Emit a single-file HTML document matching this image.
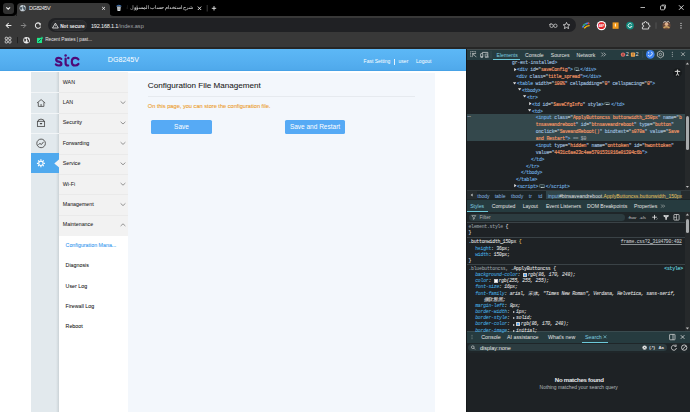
<!DOCTYPE html>
<html><head><meta charset="utf-8">
<style>
*{box-sizing:border-box;margin:0;padding:0}
html,body{width:690px;height:412px;overflow:hidden;background:#000}
body{position:relative;font-family:"Liberation Sans",sans-serif;}
.a{position:absolute;white-space:nowrap}
.t{line-height:1}
.mono{font-family:"Liberation Mono",monospace}
svg{position:absolute;overflow:visible}
.dl{font-size:4.8px;line-height:6.9px;letter-spacing:-0.23px;-webkit-text-stroke:0.14px}
.dt{font-size:5.1px;color:#e3e3e3}
</style></head><body>

<!-- ============ BROWSER CHROME ============ -->
<div class="a" style="left:0;top:0;width:690px;height:16px;background:#000"></div>
<!-- tab search button -->
<div class="a" style="left:3px;top:3px;width:10.5px;height:10.5px;border-radius:3px;background:#303030"></div>
<svg style="left:0;top:0" width="20" height="16"><path d="M6.3 7.4 L8.2 9.2 L10.1 7.4" stroke="#e8e8e8" stroke-width="1.1" fill="none"/></svg>
<!-- active tab -->
<div class="a" style="left:16.5px;top:3px;width:93px;height:14px;border-radius:4px 4px 0 0;background:#383838"></div>
<svg style="left:0;top:0" width="120" height="20">
  <path d="M12.5 16 Q16.5 16 16.5 12 L16.5 16 Z" fill="#383838"/>
  <path d="M113.5 16 Q109.5 16 109.5 12 L109.5 16 Z" fill="#383838"/>
  <circle cx="22.7" cy="8.2" r="3.1" fill="#c9d3da"/>
  <path d="M20.2 6.8 Q21.6 6.4 22.2 7.6 Q22.6 8.8 21.2 10.2 L20 9 Z M23.6 5.3 Q23.2 6.8 24.6 7.3 Q25.8 7.6 25.6 9.2 Q24.8 10.8 23.6 10.6 Q24.2 9 23 8.6 Q22 8 23 5.3 Z" fill="#4f5d68"/>
  <path d="M102.2 7 L104.9 9.7 M104.9 7 L102.2 9.7" stroke="#f0f0f0" stroke-width="0.9"/>
</svg>
<div class="a t" style="left:29px;top:5.9px;font-size:5.5px;color:#e8e8e8;letter-spacing:-0.42px">DG8245V</div>
<!-- inactive tab -->
<svg style="left:0;top:0" width="230" height="16">
  <path d="M117 6.4 L120.8 6.4 L120.4 10.8 Q118.9 11.4 117.4 10.8 Z" fill="#d6dadd"/>
  <path d="M117.3 7.9 L120.5 7.9 M117.4 9.3 L120.4 9.3" stroke="#6a7075" stroke-width="0.45"/>
  <path d="M116.4 6.2 Q118.9 4.2 121.4 6.2" stroke="#3f78c0" stroke-width="1" fill="none"/>
  <path d="M197.8 6.6 L201.2 10 M201.2 6.6 L197.8 10" stroke="#eee" stroke-width="0.9"/>
  <path d="M207.2 5 L207.2 11.5" stroke="#555" stroke-width="0.7"/>
  <path d="M211.8 8.3 L216.2 8.3 M214 6.1 L214 10.5" stroke="#eee" stroke-width="0.9"/>
</svg>
<div class="a t" style="left:126px;top:5.4px;font-size:4.7px;line-height:6px;height:7px;color:#e6e6e6;direction:rtl;width:67.5px;text-align:right;overflow:hidden;-webkit-mask-image:linear-gradient(90deg,transparent,#000 8px)">شرح استخدام حساب المسؤول ادمن | مجتمع</div>

<!-- window controls -->
<svg style="left:0;top:0" width="690" height="16">
  <path d="M640.5 7.5 L645 7.5" stroke="#ddd" stroke-width="0.8"/>
  <rect x="660.5" y="5.8" width="4" height="4" rx="0.8" fill="none" stroke="#ddd" stroke-width="0.8"/>
  <path d="M661.8 5 L665.5 5 L665.5 8.5" stroke="#ddd" stroke-width="0.7" fill="none"/>
  <path d="M679 5.3 L683.5 9.8 M683.5 5.3 L679 9.8" stroke="#eee" stroke-width="0.9"/>
</svg>

<!-- toolbar + bookmarks -->
<div class="a" style="left:0;top:16px;width:690px;height:31.5px;background:#383838"></div>
<div class="a" style="left:0;top:47.3px;width:690px;height:1.3px;background:#262626"></div>
<svg style="left:0;top:0" width="60" height="48">
  <path d="M11.4 25.5 L6.2 25.5 M8.7 23 L6.2 25.5 L8.7 28" stroke="#e8e8e8" stroke-width="1.05" fill="none"/>
  <path d="M20.8 25.5 L25.8 25.5 M23.3 23 L25.8 25.5 L23.3 28" stroke="#8a8a8a" stroke-width="0.95" fill="none"/>
  <path d="M40.3 24 A2.7 2.7 0 1 0 40.6 26.6" stroke="#e8e8e8" stroke-width="1.05" fill="none"/>
  <path d="M38.9 23 L40.6 23.8 L40.2 25.6 Z" fill="#e8e8e8" stroke="#e8e8e8" stroke-width="0.5"/>
</svg>
<!-- address bar -->
<div class="a" style="left:48px;top:18.3px;width:528px;height:14px;border-radius:7px;background:#202124"></div>
<div class="a" style="left:50.8px;top:20.4px;width:36px;height:10.6px;border-radius:5.3px;background:#2a2b2e;border:0.4px solid #313235"></div>
<svg style="left:0;top:0" width="100" height="40">
  <path d="M55.4 23.1 L52.5 28 L58.3 28 Z" stroke="#ececec" stroke-width="0.8" fill="none" stroke-linejoin="round"/>
  <path d="M55.4 24.6 L55.4 26.2 M55.4 26.8 L55.4 27.3" stroke="#ececec" stroke-width="0.6"/>
</svg>
<div class="a t" style="left:60.2px;top:24.6px;font-size:4.75px;font-weight:bold;color:#ececec">Not secure</div>
<div class="a t" style="left:90.9px;top:24px;font-size:5.6px;color:#f4f4f4;"><span style="letter-spacing:-0.2px">192.168.1.1</span><span style="color:#a0a4a8">/index.asp</span></div>
<svg style="left:0;top:0" width="690" height="40">
  <!-- eye off -->
  <circle cx="551.6" cy="25.8" r="1.7" fill="none" stroke="#c8c8c8" stroke-width="0.8"/>
  <circle cx="555.4" cy="25.8" r="1.7" fill="none" stroke="#c8c8c8" stroke-width="0.8"/>
  <path d="M549 25 Q550 23.4 551.6 23.6 M553.3 25 L553.7 25" stroke="#c8c8c8" stroke-width="0.7" fill="none"/>
  <!-- star -->
  <path d="M566.5 22.4 L567.5 24.6 L569.8 24.8 L568 26.3 L568.6 28.6 L566.5 27.4 L564.4 28.6 L565 26.3 L563.2 24.8 L565.5 24.6 Z" stroke="#e0e0e0" stroke-width="0.8" fill="none" stroke-linejoin="round"/>
  <!-- ext 1 colorful -->
  <path d="M582.6 27.6 Q584 23.6 588.8 23" stroke="#4285f4" stroke-width="1.6" fill="none"/>
  <path d="M584.2 28.2 Q586.6 25.4 589.6 25.6" stroke="#fbbc04" stroke-width="1.4" fill="none"/>
  <path d="M583 25.4 Q584.6 24 586 24.4" stroke="#34a853" stroke-width="1.2" fill="none"/>
  <circle cx="588.6" cy="23.4" r="0.9" fill="#ea4335"/>
  <!-- ABP -->
  <circle cx="601.5" cy="25.6" r="4.7" fill="#fff"/>
  <path d="M599.9 22.2 L603.1 22.2 L604.9 24 L604.9 27.2 L603.1 29 L599.9 29 L598.1 27.2 L598.1 24 Z" fill="#e3262b"/>
  <text x="601.5" y="26.7" font-size="2.6" font-family="Liberation Sans" font-weight="bold" fill="#fff" text-anchor="middle">ABP</text>
  <!-- orange -->
  <rect x="612.6" y="22.4" width="6" height="6.4" fill="#f29a1d"/>
  <path d="M615.4 23.6 L615.4 26.6" stroke="#fff" stroke-width="0.9"/>
  <!-- grammarly -->
  <circle cx="630" cy="25.6" r="3.9" fill="#138a7e"/>
  <path d="M631.7 24.4 A2 2 0 1 0 631.9 26.4 L630.4 26.4" stroke="#e9f7f4" stroke-width="0.9" fill="none"/>
  <!-- puzzle -->
  <path d="M642.4 23 L644.3 23 Q644.3 21.5 645.5 21.5 Q646.7 21.5 646.7 23 L648.6 23 L648.6 25 Q650 25 650 26.1 Q650 27.2 648.6 27.2 L648.6 29 L642.4 29 L642.4 27 Q643.8 27 643.8 26 Q643.8 25 642.4 25 Z" stroke="#e6e6e6" stroke-width="0.85" fill="none" stroke-linejoin="round"/>
  <path d="M656 22.4 L656 28.8" stroke="#5a5a5a" stroke-width="0.8"/>
  <!-- avatar -->
  <circle cx="666.5" cy="25.6" r="4" fill="#6b4a3a"/>
  <circle cx="666.5" cy="24.3" r="1.8" fill="#e0b08a"/>
  <path d="M663.5 28 Q666.5 25.5 669.5 28" stroke="#c9a060" stroke-width="1.5" fill="none"/>
  <path d="M663.2 22.5 L665 21.5 L666.5 22.3 L668.3 21.3 L669.6 22.6" stroke="#d9d9d9" stroke-width="0.8" fill="none"/>
  <!-- menu -->
  <circle cx="681" cy="23.3" r="0.65" fill="#e6e6e6"/>
  <circle cx="681" cy="25.6" r="0.65" fill="#e6e6e6"/>
  <circle cx="681" cy="27.9" r="0.65" fill="#e6e6e6"/>
</svg>

<!-- bookmarks bar -->
<svg style="left:0;top:0" width="120" height="48">
  <rect x="5.2" y="37.2" width="2.4" height="2.4" rx="0.8" fill="none" stroke="#d8d8d8" stroke-width="0.9"/>
  <rect x="8.6" y="37.2" width="2.4" height="2.4" rx="0.8" fill="none" stroke="#d8d8d8" stroke-width="0.9"/>
  <rect x="5.2" y="40.6" width="2.4" height="2.4" rx="0.8" fill="none" stroke="#d8d8d8" stroke-width="0.9"/>
  <rect x="8.6" y="40.6" width="2.4" height="2.4" rx="0.8" fill="none" stroke="#d8d8d8" stroke-width="0.9"/>
  <path d="M17.5 37 L17.5 43.2" stroke="#1a1a1a" stroke-width="0.8"/>
  <circle cx="26.6" cy="40.2" r="3.3" fill="#ececec"/>
  <path d="M24.2 38.6 Q25.6 38.4 26 39.6 Q26.2 40.8 25 42 Q24 41 24.2 38.6 Z M27.6 37.2 Q27.2 38.8 28.4 39.4 Q29.6 40 28.8 42.2 Q27.8 42.8 27.4 41.6 Q28 40.4 27 40 Q26 39.4 27.6 37.2 Z" fill="#383838"/>
  <rect x="36.8" y="37.6" width="5.4" height="5.6" fill="#1ee88e" stroke="#4a1818" stroke-width="0.45"/>
  <path d="M38.3 41.8 L40.9 39.2" stroke="#123" stroke-width="0.8"/>
  <path d="M40.8 37.3 L42.6 37.3 L42.6 39.1" stroke="#1ee88e" stroke-width="0.7" fill="none"/>
</svg>
<div class="a t" style="left:45.2px;top:37.8px;font-size:4.75px;color:#e4e4e4;letter-spacing:-0.04px">Recent Pastes | past...</div>

<!-- ============ PAGE ============ -->
<div id="page" class="a" style="left:0;top:48.6px;width:466px;height:364px;background:#fff;overflow:hidden"></div>
<!-- header -->
<div class="a" style="left:0;top:48.7px;width:466px;height:22.4px;background:linear-gradient(#5cb8f6,#55aff0 60%,#4ea8ea)"></div>
<div class="a" style="left:0;top:70.2px;width:466px;height:0.9px;background:#47a2e6"></div>
<svg style="left:0;top:0" width="466" height="80">
  <path d="M61.3 58.9 Q60.4 57.8 58.7 57.8 Q56.2 57.8 56.2 59.7 Q56.2 61.2 58.7 61.7 Q61.4 62.2 61.4 64 Q61.4 65.5 58.7 65.5 Q56.9 65.5 55.9 64.4" stroke="#4f0a78" stroke-width="2.2" fill="none" stroke-linecap="round"/>
  <circle cx="65.6" cy="55.5" r="1.25" fill="#4f0a78"/>
  <path d="M65.6 58.6 L65.6 63.2 Q65.6 65.5 68.2 65.5" stroke="#4f0a78" stroke-width="2.2" fill="none" stroke-linecap="round"/>
  <circle cx="68.3" cy="58" r="1.25" fill="#4f0a78"/>
  <path d="M78.4 59.3 Q77.3 57.8 75.2 57.8 Q71.8 57.8 71.8 61.65 Q71.8 65.5 75.2 65.5 Q77.3 65.5 78.4 64" stroke="#4f0a78" stroke-width="2.2" fill="none" stroke-linecap="round"/>
</svg>
<div class="a t" style="left:107.8px;top:56.8px;font-size:7.1px;color:#fff">DG8245V</div>
<div class="a t" style="left:363.6px;top:58.8px;font-size:5px;color:#fff">Fast Setting</div>
<div class="a" style="left:394.3px;top:58.8px;width:0.5px;height:6px;background:rgba(255,255,255,.85)"></div>
<div class="a t" style="left:398.6px;top:58.8px;font-size:5px;color:#fff">user</div>
<div class="a t" style="left:416.1px;top:58.8px;font-size:5px;color:#fff">Logout</div>

<!-- icon column -->
<div class="a" style="left:31px;top:72px;width:27.8px;height:340px;background:#e2e9ed"></div>
<div class="a" style="left:56.4px;top:72px;width:2.4px;height:340px;background:linear-gradient(90deg,rgba(200,208,212,0),rgba(200,208,212,.9))"></div>
<div class="a" style="left:31px;top:92.3px;width:27.8px;height:0.6px;background:#f2f5f7"></div>
<div class="a" style="left:31px;top:112.7px;width:27.8px;height:0.6px;background:#f2f5f7"></div>
<div class="a" style="left:31px;top:133.1px;width:27.8px;height:0.6px;background:#f2f5f7"></div>
<div class="a" style="left:31px;top:153.4px;width:28.2px;height:20px;background:#4fa9ee"></div>
<svg style="left:0;top:0" width="70" height="180">
  <path d="M54.3 163.4 L59.2 159.3 L59.2 167.5 Z" fill="#f4f4f4"/>
  <!-- home -->
  <path d="M37 103 L41.1 99.6 L45.2 103" stroke="#4d4d4d" stroke-width="0.85" fill="none" stroke-linejoin="round"/>
  <path d="M38.3 102.4 L38.3 106.4 L43.9 106.4 L43.9 102.4" stroke="#4d4d4d" stroke-width="0.85" fill="none"/>
  <rect x="40.3" y="104" width="1.6" height="2.4" fill="#4d4d4d" opacity="0.55"/>
  <!-- lock box -->
  <rect x="37.4" y="121.3" width="7.2" height="5.1" fill="none" stroke="#4d4d4d" stroke-width="0.85"/>
  <path d="M38.4 121.3 L38.4 119.9 Q41 118.3 43.6 119.9 L43.6 121.3" stroke="#4d4d4d" stroke-width="0.9" fill="none"/>
  <path d="M39.6 122.9 L42.4 122.9 L41 124.8 Z" fill="#3a3a3a"/>
  <!-- gauge -->
  <circle cx="41.1" cy="143.4" r="4.3" fill="none" stroke="#4d4d4d" stroke-width="0.9"/>
  <path d="M38.4 144.6 L39.9 143.5 L41.5 144.4 L43.6 141.8" stroke="#3a3a3a" stroke-width="0.85" fill="none"/>
  <!-- gear -->
  <circle cx="40.9" cy="163.3" r="2.2" fill="none" stroke="#fff" stroke-width="1.05"/>
  <g stroke="#fff" stroke-width="1.2" stroke-linecap="butt">
    <path d="M40.9 159.3 L40.9 160.6 M40.9 166 L40.9 167.3 M36.9 163.3 L38.2 163.3 M43.6 163.3 L44.9 163.3"/>
    <path d="M38.07 160.47 L39 161.4 M42.8 165.2 L43.73 166.13 M38.07 166.13 L39 165.2 M42.8 161.4 L43.73 160.47"/>
  </g>
</svg>

<!-- menu column -->
<div class="a" style="left:58.8px;top:72px;width:69px;height:163.6px;background:#f2f2f2"></div>
<div class="a" style="left:58.8px;top:235.6px;width:69px;height:177px;background:#fff"></div>
<div class="a" style="left:58.8px;top:92.3px;width:69px;height:0.6px;background:#eaeaea"></div>
<div class="a" style="left:58.8px;top:112.7px;width:69px;height:0.6px;background:#eaeaea"></div>
<div class="a" style="left:58.8px;top:133.1px;width:69px;height:0.6px;background:#eaeaea"></div>
<div class="a" style="left:58.8px;top:153.5px;width:69px;height:0.6px;background:#eaeaea"></div>
<div class="a" style="left:58.8px;top:173.9px;width:69px;height:0.6px;background:#eaeaea"></div>
<div class="a" style="left:58.8px;top:194.3px;width:69px;height:0.6px;background:#eaeaea"></div>
<div class="a" style="left:58.8px;top:214.7px;width:69px;height:0.6px;background:#eaeaea"></div>
<div class="a t" style="left:62.8px;top:79.5px;font-size:5.3px;color:#1e1e1e;-webkit-text-stroke:0.04px">WAN</div>
<div class="a t" style="left:62.8px;top:99.9px;font-size:5.3px;color:#1e1e1e;-webkit-text-stroke:0.04px">LAN</div>
<div class="a t" style="left:62.8px;top:120.3px;font-size:5.3px;color:#1e1e1e;-webkit-text-stroke:0.04px">Security</div>
<div class="a t" style="left:62.8px;top:140.7px;font-size:5.3px;color:#1e1e1e;-webkit-text-stroke:0.04px">Forwarding</div>
<div class="a t" style="left:62.8px;top:161.1px;font-size:5.3px;color:#1e1e1e;-webkit-text-stroke:0.04px">Service</div>
<div class="a t" style="left:62.8px;top:181.5px;font-size:5.3px;color:#1e1e1e;-webkit-text-stroke:0.04px">Wi-Fi</div>
<div class="a t" style="left:62.8px;top:201.9px;font-size:5.3px;color:#1e1e1e;-webkit-text-stroke:0.04px">Management</div>
<div class="a t" style="left:62.8px;top:222.3px;font-size:5.3px;color:#1e1e1e;-webkit-text-stroke:0.04px">Maintenance</div>
<svg style="left:0;top:0" width="130" height="240">
  <path d="M120.6 101.4 L123 103.6 L125.4 101.4" stroke="#6a6a6a" stroke-width="0.7" fill="none"/>
  <path d="M120.6 121.8 L123 124 L125.4 121.8" stroke="#6a6a6a" stroke-width="0.7" fill="none"/>
  <path d="M120.6 142.2 L123 144.4 L125.4 142.2" stroke="#6a6a6a" stroke-width="0.7" fill="none"/>
  <path d="M120.6 162.6 L123 164.8 L125.4 162.6" stroke="#6a6a6a" stroke-width="0.7" fill="none"/>
  <path d="M120.6 183 L123 185.2 L125.4 183" stroke="#6a6a6a" stroke-width="0.7" fill="none"/>
  <path d="M120.6 203.4 L123 205.6 L125.4 203.4" stroke="#6a6a6a" stroke-width="0.7" fill="none"/>
  <path d="M120.6 226 L123 223.8 L125.4 226" stroke="#6a6a6a" stroke-width="0.7" fill="none"/>
</svg>
<div class="a t" style="left:65.6px;top:243px;font-size:5.3px;color:#3d9cf0;-webkit-text-stroke:0.08px">Configuration Mana...</div>
<div class="a t" style="left:65.6px;top:263.2px;font-size:5.3px;color:#111;-webkit-text-stroke:0.04px">Diagnosis</div>
<div class="a t" style="left:65.6px;top:283.6px;font-size:5.3px;color:#111;-webkit-text-stroke:0.04px">User Log</div>
<div class="a t" style="left:65.6px;top:304px;font-size:5.3px;color:#111;-webkit-text-stroke:0.04px">Firewall Log</div>
<div class="a t" style="left:65.6px;top:324.4px;font-size:5.3px;color:#111;-webkit-text-stroke:0.04px">Reboot</div>

<!-- content -->
<div class="a" style="left:127.8px;top:72.8px;width:307.2px;height:340px;background:#f3f7fc"></div>
<div class="a t" style="left:147.8px;top:81.6px;font-size:8.1px;color:#222;-webkit-text-stroke:0.08px">Configuration File Management</div>
<div class="a" style="left:148px;top:95.6px;width:267px;height:0.5px;background:#e6eaef"></div>
<div class="a t" style="left:147.8px;top:104.2px;font-size:5.65px;color:#eda030;-webkit-text-stroke:0.1px">On this page, you can store the configuration file.</div>
<div class="a" style="left:151.2px;top:119.8px;width:60.6px;height:14.1px;border-radius:1.6px;background:#56aaf5"></div>
<div class="a t" style="left:151.2px;top:123.7px;width:60.6px;text-align:center;font-size:6.5px;color:#fff">Save</div>
<div class="a" style="left:284.6px;top:119.8px;width:60.8px;height:14.1px;border-radius:1.6px;background:#56aaf5"></div>
<div class="a t" style="left:284.6px;top:123.7px;width:60.8px;text-align:center;font-size:6.5px;color:#fff">Save and Restart</div>


<!-- ============ DEVTOOLS ============ -->
<!-- devtools bg -->
<div class="a" style="left:466px;top:48.6px;width:224px;height:364px;background:#1e2225"></div>
<div class="a" style="left:466px;top:48.6px;width:0.8px;height:364px;background:#15181a"></div>
<!-- top toolbar -->
<div class="a" style="left:466.8px;top:48.8px;width:223.2px;height:11px;background:#263c40"></div>
<div class="a" style="left:466.8px;top:48.6px;width:223.2px;height:0.6px;background:#454d4f"></div>
<svg style="left:0;top:0" width="690" height="62">
  <!-- inspect -->
  <path d="M475.6 54 L475.6 51.6 L470.6 51.6 L470.6 56.6 L472.8 56.6" stroke="#c4c7c5" stroke-width="0.75" fill="none" stroke-dasharray="1.2 0.5"/>
  <path d="M472.6 53.4 L476.4 57.2 M472.6 53.4 L472.8 56 M472.6 53.4 L475.2 53.6" stroke="#c4c7c5" stroke-width="0.75" fill="none"/>
  <!-- device -->
  <path d="M482.4 56.6 L482.4 52.4 L487.8 52.4 L487.8 56.6" stroke="#d0d3d3" stroke-width="0.75" fill="none"/>
  <rect x="480.6" y="53.6" width="2.2" height="3.4" rx="0.4" fill="#263c40" stroke="#d0d3d3" stroke-width="0.7"/>
  <path d="M480.6 57 L483 57 M485 57 L488.6 57" stroke="#e0e3e3" stroke-width="0.9"/>
  <rect x="485.2" y="54" width="2" height="2.8" rx="0.3" fill="#263c40" stroke="#d0d3d3" stroke-width="0.6"/>
  <path d="M491 50.8 L491 58" stroke="#3f5054" stroke-width="0.6"/>
  <!-- separator before icons -->
  <path d="M642.7 51 L642.7 57.8" stroke="#3f5054" stroke-width="0.6"/>
  <!-- error -->
  <circle cx="623" cy="54.6" r="2.2" fill="#e46962"/>
  <path d="M622.2 53.8 L623.8 55.4 M623.8 53.8 L622.2 55.4" stroke="#3a1a1a" stroke-width="0.55"/>
  <!-- warning -->
  <rect x="630.9" y="52.5" width="4.2" height="4.2" rx="0.7" fill="#f0a34a"/>
  <path d="M633 53.3 L633 55.1 M633 55.6 L633 56" stroke="#3a2a1a" stroke-width="0.6"/>
  <!-- AI -->
  <circle cx="650.3" cy="54.4" r="4.3" fill="#3b82f0"/>
  <path d="M651.4 51.8 A2.3 2.3 0 1 1 648 55.4" stroke="#fff" stroke-width="0.8" fill="none"/>
  <circle cx="648.6" cy="52.8" r="0.6" fill="#fff"/>
  <!-- gear -->
  <path d="M660.4 50.9 L663.4 52.65 L663.4 56.15 L660.4 57.9 L657.4 56.15 L657.4 52.65 Z" fill="none" stroke="#c4c7c5" stroke-width="0.8" stroke-linejoin="round"/>
  <circle cx="660.4" cy="54.4" r="1.2" fill="none" stroke="#c4c7c5" stroke-width="0.7"/>
  <!-- kebab -->
  <circle cx="672.3" cy="52.3" r="0.5" fill="#c4c7c5"/>
  <circle cx="672.3" cy="54.3" r="0.5" fill="#c4c7c5"/>
  <circle cx="672.3" cy="56.3" r="0.5" fill="#c4c7c5"/>
  <!-- close -->
  <path d="M681.2 52.4 L684.8 56 M684.8 52.4 L681.2 56" stroke="#c4c7c5" stroke-width="0.75"/>
  <!-- >> -->
  <path d="M601.4 52.6 L603.2 54.5 L601.4 56.4 M603.8 52.6 L605.6 54.5 L603.8 56.4" stroke="#d0d0d0" stroke-width="0.7" fill="none"/>
</svg>
<div class="a t dt" style="left:496.6px;top:52.6px;color:#7fcfe0">Elements</div>
<div class="a" style="left:493px;top:58.9px;width:27px;height:0.8px;background:#6cc9d9"></div>
<div class="a t dt" style="left:525px;top:52.6px">Console</div>
<div class="a t dt" style="left:550.8px;top:52.6px">Sources</div>
<div class="a t dt" style="left:576.6px;top:52.6px">Network</div>
<div class="a t dt" style="left:625.9px;top:52.4px;font-size:5px">2</div>
<div class="a t dt" style="left:635.8px;top:52.4px;font-size:5px">2</div>

<!-- a11y icon -->
<svg style="left:0;top:0" width="690" height="80">
  <circle cx="677.5" cy="72.6" r="4.4" fill="#16191b"/>
  <circle cx="677.5" cy="70.3" r="0.8" fill="#e6e6e6"/>
  <path d="M674.8 71.4 L680.2 71.4 M677.5 71.4 L677.5 73.6 M677.5 73.4 L676.3 75.6 M677.5 73.4 L678.7 75.6" stroke="#e6e6e6" stroke-width="0.9" fill="none"/>
</svg>
<!-- selected node highlight -->
<div class="a" style="left:466.8px;top:113.7px;width:218px;height:27.4px;background:#34484c"></div>
<div class="a t" style="left:467.2px;top:114.6px;font-size:4px;color:#9aa0a6;letter-spacing:-0.3px">•••</div>
<!-- elements scrollbar -->
<div class="a" style="left:684.7px;top:59.8px;width:5.3px;height:130.5px;background:#26292b"></div>
<div class="a" style="left:685.8px;top:116px;width:3.2px;height:34.4px;border-radius:1.6px;background:#a8abad"></div>
<svg style="left:0;top:0" width="690" height="200">
  <path d="M685.8 64.4 L687.4 62.6 L689 64.4 Z" fill="#bdbdbd"/>
  <path d="M685.8 186 L687.4 187.8 L689 186 Z" fill="#bdbdbd"/>
</svg>
<div class="a mono dl" style="left:512px;top:60.45px"><span style="color:#9bbbdc;">gr-ext-installed</span><span style="color:#6aa4dc;">&gt;</span></div>
<svg style="left:513.50px;top:67.57px" width="3" height="3"><path d="M0.2 0 L2.6 1.6 L0.2 3.2 Z" fill="#e2e2e2"/></svg>
<div class="a mono dl" style="left:517px;top:67.32px"><span style="color:#6aa4dc;">&lt;div</span> <span style="color:#9bbbdc;">id</span><span style="color:#e3e3e3;">=</span><span style="color:#9bbbdc;">&quot;</span><span style="color:#f29766;">saveConfig</span><span style="color:#9bbbdc;">&quot;</span><span style="color:#6aa4dc;">&gt;</span><span style="display:inline-block;position:relative;width:5.6px;height:3.8px;margin:0 1.2px 0 0.8px;vertical-align:0.4px;border-radius:1.2px;background:#2c3b3e;border:0.4px solid #56686c;-webkit-text-stroke:0"><span style="position:absolute;left:1.1px;top:1.5px;width:0.7px;height:0.7px;background:#b8c4c6;box-shadow:1.2px 0 #b8c4c6,2.4px 0 #b8c4c6"></span></span><span style="color:#6aa4dc;">&lt;/div</span><span style="color:#6aa4dc;">&gt;</span></div>
<div class="a mono dl" style="left:516.3px;top:74.19px"><span style="color:#6aa4dc;">&lt;div</span> <span style="color:#9bbbdc;">class</span><span style="color:#e3e3e3;">=</span><span style="color:#9bbbdc;">&quot;</span><span style="color:#f29766;">title_spread</span><span style="color:#9bbbdc;">&quot;</span><span style="color:#6aa4dc;">&gt;</span><span style="color:#6aa4dc;">&lt;/div</span><span style="color:#6aa4dc;">&gt;</span></div>
<svg style="left:513.10px;top:81.61px" width="3" height="3"><path d="M0 0.2 L3.2 0.2 L1.6 2.6 Z" fill="#e2e2e2"/></svg>
<div class="a mono dl" style="left:517px;top:81.06px"><span style="color:#6aa4dc;">&lt;table</span> <span style="color:#9bbbdc;">width</span><span style="color:#e3e3e3;">=</span><span style="color:#9bbbdc;">&quot;</span><span style="color:#f29766;">100%</span><span style="color:#9bbbdc;">&quot;</span> <span style="color:#9bbbdc;">cellpadding</span><span style="color:#e3e3e3;">=</span><span style="color:#9bbbdc;">&quot;</span><span style="color:#f29766;">0</span><span style="color:#9bbbdc;">&quot;</span> <span style="color:#9bbbdc;">cellspacing</span><span style="color:#e3e3e3;">=</span><span style="color:#9bbbdc;">&quot;</span><span style="color:#f29766;">0</span><span style="color:#9bbbdc;">&quot;</span><span style="color:#6aa4dc;">&gt;</span></div>
<svg style="left:518.10px;top:88.48px" width="3" height="3"><path d="M0 0.2 L3.2 0.2 L1.6 2.6 Z" fill="#e2e2e2"/></svg>
<div class="a mono dl" style="left:522px;top:87.93px"><span style="color:#6aa4dc;">&lt;tbody</span><span style="color:#6aa4dc;">&gt;</span></div>
<svg style="left:523.10px;top:95.35px" width="3" height="3"><path d="M0 0.2 L3.2 0.2 L1.6 2.6 Z" fill="#e2e2e2"/></svg>
<div class="a mono dl" style="left:527px;top:94.80px"><span style="color:#6aa4dc;">&lt;tr</span><span style="color:#6aa4dc;">&gt;</span></div>
<svg style="left:528.50px;top:101.92px" width="3" height="3"><path d="M0.2 0 L2.6 1.6 L0.2 3.2 Z" fill="#e2e2e2"/></svg>
<div class="a mono dl" style="left:532px;top:101.67px"><span style="color:#6aa4dc;">&lt;td</span> <span style="color:#9bbbdc;">id</span><span style="color:#e3e3e3;">=</span><span style="color:#9bbbdc;">&quot;</span><span style="color:#f29766;">SaveCfgInfo</span><span style="color:#9bbbdc;">&quot;</span> <span style="color:#9bbbdc;">style</span><span style="color:#6aa4dc;">&gt;</span><span style="display:inline-block;position:relative;width:5.6px;height:3.8px;margin:0 1.2px 0 0.8px;vertical-align:0.4px;border-radius:1.2px;background:#2c3b3e;border:0.4px solid #56686c;-webkit-text-stroke:0"><span style="position:absolute;left:1.1px;top:1.5px;width:0.7px;height:0.7px;background:#b8c4c6;box-shadow:1.2px 0 #b8c4c6,2.4px 0 #b8c4c6"></span></span><span style="color:#6aa4dc;">&lt;/td</span><span style="color:#6aa4dc;">&gt;</span></div>
<svg style="left:528.10px;top:109.09px" width="3" height="3"><path d="M0 0.2 L3.2 0.2 L1.6 2.6 Z" fill="#e2e2e2"/></svg>
<div class="a mono dl" style="left:532px;top:108.54px"><span style="color:#6aa4dc;">&lt;td</span><span style="color:#6aa4dc;">&gt;</span></div>
<div class="a mono dl" style="left:535.8px;top:115.41px"><span style="color:#6aa4dc;">&lt;input</span> <span style="color:#9bbbdc;">class</span><span style="color:#e3e3e3;">=</span><span style="color:#9bbbdc;">&quot;</span><span style="color:#f29766;">ApplyButtoncss buttonwidth_150px</span><span style="color:#9bbbdc;">&quot;</span> <span style="color:#9bbbdc;">name</span><span style="color:#e3e3e3;">=</span><span style="color:#9bbbdc;">&quot;</span><span style="color:#f29766;">b</span></div>
<div class="a mono dl" style="left:535.8px;top:122.28px"><span style="color:#f29766;">tnsaveandreboot</span><span style="color:#9bbbdc;">&quot;</span> <span style="color:#9bbbdc;">id</span><span style="color:#e3e3e3;">=</span><span style="color:#9bbbdc;">&quot;</span><span style="color:#f29766;">btnsaveandreboot</span><span style="color:#9bbbdc;">&quot;</span> <span style="color:#9bbbdc;">type</span><span style="color:#e3e3e3;">=</span><span style="color:#9bbbdc;">&quot;</span><span style="color:#f29766;">button</span><span style="color:#9bbbdc;">&quot;</span></div>
<div class="a mono dl" style="left:535.8px;top:129.15px"><span style="color:#9bbbdc;">onclick</span><span style="color:#e3e3e3;">=</span><span style="color:#9bbbdc;">&quot;</span><span style="color:#f29766;">SaveandReboot()</span><span style="color:#9bbbdc;">&quot;</span> <span style="color:#9bbbdc;">bindtext</span><span style="color:#e3e3e3;">=</span><span style="color:#9bbbdc;">&quot;</span><span style="color:#f29766;">s070a</span><span style="color:#9bbbdc;">&quot;</span> <span style="color:#9bbbdc;">value</span><span style="color:#e3e3e3;">=</span><span style="color:#9bbbdc;">&quot;</span><span style="color:#f29766;">Save</span></div>
<div class="a mono dl" style="left:535.8px;top:136.02px"><span style="color:#f29766;">and Restart</span><span style="color:#9bbbdc;">&quot;</span><span style="color:#6aa4dc;">&gt;</span><span style="color:#9aa0a6;"> == $0</span></div>
<div class="a mono dl" style="left:535.8px;top:142.89px"><span style="color:#6aa4dc;">&lt;input</span> <span style="color:#9bbbdc;">type</span><span style="color:#e3e3e3;">=</span><span style="color:#9bbbdc;">&quot;</span><span style="color:#f29766;">hidden</span><span style="color:#9bbbdc;">&quot;</span> <span style="color:#9bbbdc;">name</span><span style="color:#e3e3e3;">=</span><span style="color:#9bbbdc;">&quot;</span><span style="color:#f29766;">onttoken</span><span style="color:#9bbbdc;">&quot;</span> <span style="color:#9bbbdc;">id</span><span style="color:#e3e3e3;">=</span><span style="color:#9bbbdc;">&quot;</span><span style="color:#f29766;">hwonttoken</span><span style="color:#9bbbdc;">&quot;</span></div>
<div class="a mono dl" style="left:535.8px;top:149.76px"><span style="color:#9bbbdc;">value</span><span style="color:#e3e3e3;">=</span><span style="color:#9bbbdc;">&quot;</span><span style="color:#f29766;">4431c6ae23c4ee5701531816e81304c6b</span><span style="color:#9bbbdc;">&quot;</span><span style="color:#6aa4dc;">&gt;</span></div>
<div class="a mono dl" style="left:531px;top:156.63px"><span style="color:#6aa4dc;">&lt;/td</span><span style="color:#6aa4dc;">&gt;</span></div>
<div class="a mono dl" style="left:526px;top:163.50px"><span style="color:#6aa4dc;">&lt;/tr</span><span style="color:#6aa4dc;">&gt;</span></div>
<div class="a mono dl" style="left:521px;top:170.37px"><span style="color:#6aa4dc;">&lt;/tbody</span><span style="color:#6aa4dc;">&gt;</span></div>
<div class="a mono dl" style="left:516px;top:177.24px"><span style="color:#6aa4dc;">&lt;/table</span><span style="color:#6aa4dc;">&gt;</span></div>
<svg style="left:513.50px;top:184.36px" width="3" height="3"><path d="M0.2 0 L2.6 1.6 L0.2 3.2 Z" fill="#e2e2e2"/></svg>
<div class="a mono dl" style="left:517px;top:184.11px"><span style="color:#6aa4dc;">&lt;script</span><span style="color:#6aa4dc;">&gt;</span><span style="display:inline-block;position:relative;width:5.6px;height:3.8px;margin:0 1.2px 0 0.8px;vertical-align:0.4px;border-radius:1.2px;background:#2c3b3e;border:0.4px solid #56686c;-webkit-text-stroke:0"><span style="position:absolute;left:1.1px;top:1.5px;width:0.7px;height:0.7px;background:#b8c4c6;box-shadow:1.2px 0 #b8c4c6,2.4px 0 #b8c4c6"></span></span><span style="color:#6aa4dc;">&lt;/script</span><span style="color:#6aa4dc;">&gt;</span></div>
<!-- breadcrumbs -->
<div class="a" style="left:466.8px;top:190.3px;width:223.2px;height:9.5px;background:#1d2527"></div>
<div class="a" style="left:466.8px;top:190.3px;width:223.2px;height:0.5px;background:#333a3d"></div>
<div class="a" style="left:467px;top:191px;width:9.6px;height:8.4px;background:#262c2e"></div>
<svg style="left:0;top:0" width="690" height="200"><path d="M472.6 193.6 L470.6 195 L472.6 196.4 Z" fill="#c4c7c5"/><path d="M686 193.6 L688 195 L686 196.4 Z" fill="#c4c7c5"/></svg>
<div class="a" style="left:546.2px;top:191px;width:134.5px;height:8.4px;background:#30454a"></div>
<div class="a" style="left:681px;top:191px;width:9px;height:8.4px;background:#262c2e"></div>
<div class="a t dt" style="left:477.3px;top:193.6px;color:#86b6e6;font-size:5px">tbody</div>
<div class="a t dt" style="left:494.7px;top:193.6px;color:#86b6e6;font-size:5px">table</div>
<div class="a t dt" style="left:511px;top:193.6px;color:#86b6e6;font-size:5px">tbody</div>
<div class="a t dt" style="left:528.8px;top:193.6px;color:#86b6e6;font-size:5px">tr</div>
<div class="a t dt" style="left:538.2px;top:193.6px;color:#86b6e6;font-size:5px">td</div>
<div class="a t dt" style="left:548px;top:193.6px;font-size:5.05px;letter-spacing:0px"><span style="color:#86b6e6">input</span><span style="color:#e3e3e3">#btnsaveandreboot</span><span style="color:#e8c15a">.ApplyButtoncss.buttonwidth_150px</span></div>

<!-- styles tabs -->
<div class="a" style="left:466.8px;top:199.8px;width:223.2px;height:12.2px;background:#263b3f"></div>
<div class="a t dt" style="left:470.2px;top:203.6px;color:#7fcfe0">Styles</div>
<div class="a" style="left:467px;top:210.5px;width:20.5px;height:1px;background:#6cc9d9"></div>
<div class="a t dt" style="left:491.8px;top:203.6px">Computed</div>
<div class="a t dt" style="left:522.7px;top:203.6px">Layout</div>
<div class="a t dt" style="left:545.9px;top:203.6px">Event Listeners</div>
<div class="a t dt" style="left:587px;top:203.6px">DOM Breakpoints</div>
<div class="a t dt" style="left:634px;top:203.6px">Properties</div>
<svg style="left:0;top:0" width="690" height="215"><path d="M661.2 204.6 L662.6 206.1 L661.2 207.6 M663.2 204.6 L664.6 206.1 L663.2 207.6" stroke="#c4c7c5" stroke-width="0.6" fill="none"/></svg>

<!-- filter row -->
<div class="a" style="left:466.8px;top:212px;width:223.2px;height:9.8px;background:#1f2629"></div>
<div class="a" style="left:468.6px;top:213.5px;width:156.2px;height:7.3px;border-radius:3.65px;background:#2c3c40"></div>
<svg style="left:0;top:0" width="690" height="225">
  <path d="M471.8 215.6 L475.8 215.6 L474.3 217.4 L474.3 219 L473.3 219.4 L473.3 217.4 Z" fill="none" stroke="#c4c7c5" stroke-width="0.6" stroke-linejoin="round"/>
  <path d="M652.2 217.2 L656.8 217.2 M654.5 214.9 L654.5 219.5" stroke="#e3e3e3" stroke-width="0.85"/>
  <path d="M656.6 219.4 L657.6 218.6" stroke="#e3e3e3" stroke-width="0.6"/>
  <path d="M663.6 215 L668.6 215 L668.6 216.6 L666.8 217.4 L666.8 219.8 L665.4 219.8 L665.4 217.4 L663.6 216.6 Z" fill="#e3e3e3"/>
  <path d="M664.6 215.9 L667.6 215.9" stroke="#263b3f" stroke-width="0.5"/>
  <rect x="673.9" y="214.5" width="5.2" height="5.6" rx="0.6" fill="none" stroke="#e3e3e3" stroke-width="0.7"/>
  <path d="M676.5 214.5 L676.5 220.1 M673.9 217.3 L676.5 217.3" stroke="#e3e3e3" stroke-width="0.55"/>
</svg>
<div class="a t dt" style="left:479.5px;top:215.2px;color:#a9b0b3;font-size:5px">Filter</div>
<div class="a t dt" style="left:627.8px;top:215.6px;font-size:4.4px;font-style:italic;color:#d8dadb">:hov</div>
<div class="a t dt" style="left:639.4px;top:215.6px;font-size:4.4px;font-style:italic;color:#d8dadb">.cls</div>
<div class="a" style="left:466.8px;top:221.8px;width:218px;height:0.5px;background:#3a4246"></div>

<!-- styles scrollbar -->
<div class="a" style="left:684.7px;top:211.8px;width:5.3px;height:119.6px;background:#26292b"></div>
<div class="a" style="left:685.9px;top:218.8px;width:3.1px;height:14.6px;border-radius:1.5px;background:#a8abad"></div>
<svg style="left:0;top:0" width="690" height="340">
  <path d="M685.8 215.4 L687.4 213.6 L689 215.4 Z" fill="#bdbdbd"/>
  <path d="M685.8 327.6 L687.4 329.4 L689 327.6 Z" fill="#bdbdbd"/>
</svg>
<!-- style separators -->
<div class="a" style="left:466.8px;top:236.8px;width:218px;height:0.5px;background:#3a4246"></div>
<div class="a" style="left:466.8px;top:264.2px;width:218px;height:0.5px;background:#3a4246"></div>
<div class="a mono dl" style="left:620.8px;top:238.95px;color:#c4c8cb;-webkit-text-stroke:0.05px;text-decoration:underline;text-decoration-thickness:0.3px;text-underline-offset:0.6px;text-decoration-color:#8a9094">frame.css?2_3184790:492</div>
<div class="a mono dl" style="left:664.3px;top:265.95px;color:#5fc5d3">&lt;style&gt;</div>

<!-- drawer -->
<div class="a" style="left:466.8px;top:331.4px;width:223.2px;height:11.2px;background:#263b3f"></div>
<div class="a" style="left:466.8px;top:331.4px;width:223.2px;height:0.5px;background:#3a4b4f"></div>
<svg style="left:0;top:0" width="690" height="360">
  <circle cx="472" cy="335.3" r="0.45" fill="#c4c7c5"/><circle cx="472" cy="337" r="0.45" fill="#c4c7c5"/><circle cx="472" cy="338.7" r="0.45" fill="#c4c7c5"/>
  <path d="M603.6 335.4 L606.4 338.2 M606.4 335.4 L603.6 338.2" stroke="#7fcfe0" stroke-width="0.65"/>
  <rect x="669.6" y="334.4" width="5.4" height="5.4" rx="0.5" fill="none" stroke="#e3e3e3" stroke-width="0.7"/>
  <path d="M673 334.4 L673 339.8" stroke="#e3e3e3" stroke-width="0.7"/>
  <path d="M680.8 335.2 L684.4 338.8 M684.4 335.2 L680.8 338.8" stroke="#e3e3e3" stroke-width="0.75"/>
</svg>
<div class="a t dt" style="left:481.3px;top:334.9px;font-size:5.3px">Console</div>
<div class="a t dt" style="left:507px;top:334.9px;font-size:5.3px">AI assistance</div>
<div class="a t dt" style="left:548px;top:334.9px;font-size:5.3px">What's new</div>
<div class="a t dt" style="left:585px;top:334.9px;font-size:5.3px;color:#7fcfe0">Search</div>
<div class="a" style="left:582px;top:341.6px;width:25.5px;height:0.8px;background:#6cc9d9"></div>

<!-- search row -->
<div class="a" style="left:466.8px;top:342.6px;width:223.2px;height:10.2px;background:#1f2629"></div>
<div class="a" style="left:468px;top:343.8px;width:199px;height:7.6px;border-radius:3.8px;background:#2c3c40"></div>
<svg style="left:0;top:0" width="690" height="360">
  <circle cx="472.8" cy="347.2" r="1.35" fill="none" stroke="#e3e3e3" stroke-width="0.6"/>
  <path d="M473.8 348.2 L475 349.4" stroke="#e3e3e3" stroke-width="0.7"/>
  <circle cx="644.6" cy="347.6" r="2.2" fill="#e3e3e3"/>
  <path d="M643.8 346.8 L645.4 348.4 M645.4 346.8 L643.8 348.4" stroke="#2c3c40" stroke-width="0.5"/>
  <path d="M675.6 345.9 A2.5 2.5 0 1 0 676.4 348" stroke="#e3e3e3" stroke-width="0.8" fill="none"/>
  <path d="M675.9 344.4 L676.3 346.3 L674.4 346.5" stroke="#e3e3e3" stroke-width="0.7" fill="none"/>
  <circle cx="684.2" cy="347.6" r="2.7" fill="none" stroke="#e3e3e3" stroke-width="0.8"/>
  <path d="M682.4 349.4 L686 345.8" stroke="#e3e3e3" stroke-width="0.8"/>
</svg>
<div class="a t dt" style="left:480px;top:345.6px;font-size:5.5px;color:#eaeaea">display:none</div>
<div class="a t dt" style="left:649.2px;top:346.2px;font-size:4.2px;font-weight:bold">(.*)</div>
<div class="a t dt" style="left:658.6px;top:346.2px;font-size:4.2px;font-weight:bold">Aa</div>

<!-- results -->
<div class="a t" style="left:554.8px;top:376.6px;font-size:6.1px;font-weight:bold;color:#e8eaed;letter-spacing:-0.27px">No matches found</div>
<div class="a t" style="left:539.6px;top:385.6px;font-size:4.95px;color:#b4b9bc">Nothing matched your search query</div>
<div class="a mono dl" style="left:468.4px;top:223.55px;-webkit-text-stroke:0.05px;"><span style="color:#9aa0a6;">element.style</span><span style="color:#e3e3e3;"> {</span></div>
<div class="a mono dl" style="left:468.4px;top:230.05px;-webkit-text-stroke:0.05px;"><span style="color:#e3e3e3;">}</span></div>
<div class="a mono dl" style="left:468.4px;top:238.95px;-webkit-text-stroke:0.05px;"><span style="color:#e3e3e3;">.buttonwidth_150px</span><span style="color:#e8d36a;"> {</span></div>
<div class="a mono dl" style="left:475.2px;top:245.55px;-webkit-text-stroke:0.05px;"><span style="color:#46aee0;">height</span><span style="color:#e3e3e3;">: 36px;</span></div>
<div class="a mono dl" style="left:475.2px;top:251.65px;-webkit-text-stroke:0.05px;"><span style="color:#46aee0;">width</span><span style="color:#e3e3e3;">: 150px;</span></div>
<div class="a mono dl" style="left:468.4px;top:257.85px;-webkit-text-stroke:0.05px;"><span style="color:#e3e3e3;">}</span></div>
<div class="a mono dl" style="left:468.4px;top:265.95px;-webkit-text-stroke:0.05px;"><span style="color:#9aa0a6;">.bluebuttoncss,</span><span style="color:#e3e3e3;"> .ApplyButtoncss {</span></div>
<div class="a mono dl" style="left:475.2px;top:272.25px;-webkit-text-stroke:0.05px;font-style:italic;"><span style="color:#46aee0;">background-color</span><span style="color:#e3e3e3;">: </span><span style="display:inline-block;width:3.8px;height:3.8px;margin:0 0.8px 0 0.2px;vertical-align:-0.3px;background:#56aaf8;border:0.3px solid #ccc;-webkit-text-stroke:0"></span><span style="color:#e3e3e3;">rgb(86, 170, 248);</span></div>
<div class="a mono dl" style="left:475.2px;top:278.45px;-webkit-text-stroke:0.05px;font-style:italic;"><span style="color:#46aee0;">color</span><span style="color:#e3e3e3;">: </span><span style="display:inline-block;width:3.8px;height:3.8px;margin:0 0.8px 0 0.2px;vertical-align:-0.3px;background:#ffffff;border:0.3px solid #ccc;-webkit-text-stroke:0"></span><span style="color:#e3e3e3;">rgb(255, 255, 255);</span></div>
<div class="a mono dl" style="left:475.2px;top:284.45px;-webkit-text-stroke:0.05px;font-style:italic;"><span style="color:#46aee0;">font-size</span><span style="color:#e3e3e3;">: 16px;</span></div>
<div class="a mono dl" style="left:475.2px;top:290.55px;-webkit-text-stroke:0.05px;font-style:italic;"><span style="color:#46aee0;">font-family</span><span style="color:#e3e3e3;">: arial, 宋体, &quot;Times New Roman&quot;, Verdana, Helvetica, sans-serif,</span></div>
<div class="a mono dl" style="left:483.6px;top:296.65px;-webkit-text-stroke:0.05px;font-style:italic;"><span style="color:#e3e3e3;">微软雅黑;</span></div>
<div class="a mono dl" style="left:475.2px;top:302.85px;-webkit-text-stroke:0.05px;font-style:italic;"><span style="color:#46aee0;">margin-left</span><span style="color:#e3e3e3;">: 8px;</span></div>
<div class="a mono dl" style="left:475.2px;top:309.05px;-webkit-text-stroke:0.05px;font-style:italic;"><span style="color:#46aee0;">border-width</span><span style="color:#e3e3e3;">: </span><span style="display:inline-block;width:0;height:0;border-left:2.8px solid #e0e0e0;border-top:1.8px solid transparent;border-bottom:1.8px solid transparent;margin:0 1.4px 0 0.4px;vertical-align:-0.1px"></span><span style="color:#e3e3e3;">1px;</span></div>
<div class="a mono dl" style="left:475.2px;top:315.25px;-webkit-text-stroke:0.05px;font-style:italic;"><span style="color:#46aee0;">border-style</span><span style="color:#e3e3e3;">: </span><span style="display:inline-block;width:0;height:0;border-left:2.8px solid #e0e0e0;border-top:1.8px solid transparent;border-bottom:1.8px solid transparent;margin:0 1.4px 0 0.4px;vertical-align:-0.1px"></span><span style="color:#e3e3e3;">solid;</span></div>
<div class="a mono dl" style="left:475.2px;top:321.45px;-webkit-text-stroke:0.05px;font-style:italic;"><span style="color:#46aee0;">border-color</span><span style="color:#e3e3e3;">: </span><span style="display:inline-block;width:0;height:0;border-left:2.8px solid #e0e0e0;border-top:1.8px solid transparent;border-bottom:1.8px solid transparent;margin:0 1.4px 0 0.4px;vertical-align:-0.1px"></span><span style="display:inline-block;width:3.8px;height:3.8px;margin:0 0.8px 0 0.2px;vertical-align:-0.3px;background:#56aaf8;border:0.3px solid #ccc;-webkit-text-stroke:0"></span><span style="color:#e3e3e3;">rgb(86, 170, 248);</span></div>
<div class="a mono dl" style="left:475.2px;top:327.65px;-webkit-text-stroke:0.05px;font-style:italic;"><span style="color:#46aee0;">border-image</span><span style="color:#e3e3e3;">: </span><span style="display:inline-block;width:0;height:0;border-left:2.8px solid #e0e0e0;border-top:1.8px solid transparent;border-bottom:1.8px solid transparent;margin:0 1.4px 0 0.4px;vertical-align:-0.1px"></span><span style="color:#e3e3e3;">initial;</span></div>
</body></html>
